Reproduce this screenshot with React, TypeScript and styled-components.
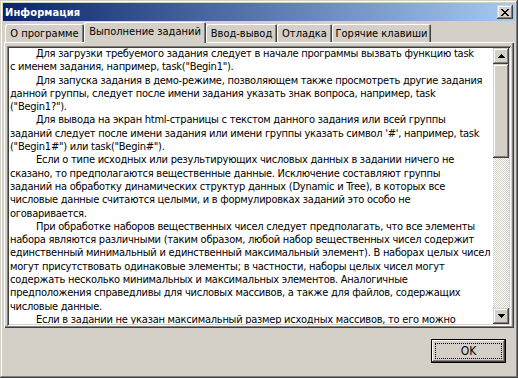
import React from 'react'
import styled, { createGlobalStyle } from 'styled-components'

const GlobalStyle = createGlobalStyle`
  html, body {
    margin: 0;
    padding: 0;
    background: #d4d0c8;
  }
  body {
    font-family: 'DejaVu Sans', 'Liberation Sans', sans-serif;
    font-stretch: condensed;
    font-size: 11px;
  }
`

const raised = `
  box-shadow: inset -1px -1px #404040, inset 1px 1px #d4d0c8,
    inset -2px -2px #808080, inset 2px 2px #ffffff;
`

const WindowStyled = styled.div`
  width: 518px;
  height: 378px;
  box-sizing: border-box;
  padding: 3px;
  background: #d4d0c8;
  display: flex;
  flex-direction: column;
  ${raised}
`

const TitleBarStyled = styled.div`
  height: 18px;
  flex: none;
  display: flex;
  align-items: center;
  justify-content: space-between;
  padding: 0 2px 0 2px;
  background: linear-gradient(to right, #0a246a, #a6caf0);
`

const TitleTextStyled = styled.span`
  color: #ffffff;
  font-weight: bold;
  font-size: 11px;
  letter-spacing: 0.1px;
`

const CloseButtonStyled = styled.div`
  width: 16px;
  height: 14px;
  background: #d4d0c8;
  display: flex;
  align-items: center;
  justify-content: center;
  ${raised}
`

const TabStripStyled = styled.div`
  height: 20px;
  flex: none;
  margin-top: 1px;
  padding-left: 2px;
  display: flex;
  align-items: flex-end;
  position: relative;
  z-index: 1;
`

const TabStyled = styled.div<{ $width: number; $active?: boolean }>`
  width: ${(p) => p.$width}px;
  height: ${(p) => (p.$active ? 21 : 18)}px;
  margin-bottom: ${(p) => (p.$active ? -1 : 0)}px;
  box-sizing: border-box;
  display: flex;
  align-items: center;
  justify-content: center;
  padding-bottom: ${(p) => (p.$active ? 2 : 0)}px;
  color: #000;
  background: #d4d0c8;
  border-top-left-radius: 2px;
  border-top-right-radius: 2px;
  box-shadow: inset 1px 1px #ffffff, inset -1px 0 #404040, inset -2px 0 #808080;
  white-space: nowrap;
`

const PanelStyled = styled.div`
  margin: 0 1px;
  height: 286px;
  flex: none;
  box-sizing: border-box;
  padding: 4px 3px 2px 3px;
  display: flex;
  box-shadow: inset 1px 1px #ffffff, inset -1px -1px #404040,
    inset -2px -2px #808080;
`

const TextBoxStyled = styled.div`
  flex: 1;
  display: flex;
  padding: 2px;
  background: #ffffff;
  box-shadow: inset 1px 1px #808080, inset -1px -1px #ffffff,
    inset 2px 2px #404040, inset -2px -2px #d4d0c8;
  overflow: hidden;
`

const TextAreaStyled = styled.div`
  flex: 1;
  padding: 0 0 0 1px;
  margin-top: -1px;
  overflow: hidden;
  color: #000;
  line-height: 13.3px;
  letter-spacing: -0.25px;
`

const LineStyled = styled.div<{ $indent?: boolean }>`
  white-space: nowrap;
  padding-left: ${(p) => (p.$indent ? 26 : 0)}px;
`

const ScrollBarStyled = styled.div`
  width: 16px;
  display: flex;
  flex-direction: column;
`

const ScrollButtonStyled = styled.div`
  width: 16px;
  height: 16px;
  flex: none;
  background: #d4d0c8;
  display: flex;
  align-items: center;
  justify-content: center;
  ${raised}
`

const ThumbStyled = styled.div`
  height: 94px;
  flex: none;
  background: #d4d0c8;
  ${raised}
`

const TrackStyled = styled.div`
  flex: 1;
  background: repeating-conic-gradient(#d4d0c8 0 25%, #ffffff 0 50%) 0 0 / 2px 2px;
`

const FooterStyled = styled.div`
  flex: 1;
  display: flex;
  justify-content: flex-end;
  align-items: flex-start;
  padding: 11px 9px 0 0;
`

const ButtonStyled = styled.div`
  width: 75px;
  height: 24px;
  box-sizing: border-box;
  border: 1px solid #000;
  padding: 3px;
  background: #d4d0c8;
  box-shadow: inset -1px -1px #404040, inset 1px 1px #ffffff,
    inset -2px -2px #808080;
  display: flex;
`

const FocusStyled = styled.div`
  flex: 1;
  border: 1px dotted #000;
  display: flex;
  align-items: center;
  justify-content: center;
  font-size: 12px;
  color: #000;
`

const paragraphs: string[][] = [
  [
    'Для загрузки требуемого задания следует в начале программы вызвать функцию task',
    'с именем задания, например, task("Begin1").',
  ],
  [
    'Для запуска задания в демо-режиме, позволяющем также просмотреть другие задания',
    'данной группы, следует после имени задания указать знак вопроса, например, task',
    '("Begin1?").',
  ],
  [
    'Для вывода на экран html-страницы с текстом данного задания или всей группы',
    "заданий следует после имени задания или имени группы указать символ '#', например, task",
    '("Begin1#") или task("Begin#").',
  ],
  [
    'Если о типе исходных или результирующих числовых данных в задании ничего не',
    'сказано, то предполагаются вещественные данные. Исключение составляют группы',
    'заданий на обработку динамических структур данных (Dynamic и Tree), в которых все',
    'числовые данные считаются целыми, и в формулировках заданий это особо не',
    'оговаривается.',
  ],
  [
    'При обработке наборов вещественных чисел следует предполагать, что все элементы',
    'набора являются различными (таким образом, любой набор вещественных чисел содержит',
    'единственный минимальный и единственный максимальный элемент). В наборах целых чисел',
    'могут присутствовать одинаковые элементы; в частности, наборы целых чисел могут',
    'содержать несколько минимальных и максимальных элементов. Аналогичные',
    'предположения справедливы для числовых массивов, а также для файлов, содержащих',
    'числовые данные.',
  ],
  [
    'Если в задании не указан максимальный размер исходных массивов, то его можно',
    'считать равным 10.',
  ],
]

const tabs = [
  { label: 'О программе', width: 79 },
  { label: 'Выполнение заданий', width: 122, active: true },
  { label: 'Ввод-вывод', width: 71 },
  { label: 'Отладка', width: 55 },
  { label: 'Горячие клавиши', width: 99 },
]

const Arrow = ({ down }: { down?: boolean }) => (
  <svg width='7' height='4' viewBox='0 0 7 4' shapeRendering='crispEdges'>
    <path d={down ? 'M0 0h7L3.5 4z' : 'M3.5 0L7 4H0z'} fill='#000' />
  </svg>
)

const App = () => {
  return (
    <>
      <GlobalStyle />
      <WindowStyled>
        <TitleBarStyled>
          <TitleTextStyled>Информация</TitleTextStyled>
          <CloseButtonStyled>
            <svg width='8' height='7' viewBox='0 0 8 7' shapeRendering='crispEdges'>
              <path
                d='M0 0h2v1h1v1h2V1h1V0h2v1H7v1H6v1H5v1h1v1h1v1h1v1H6V6H5V5H3v1H2v1H0V6h1V5h1V4h1V3H2V2H1V1H0z'
                fill='#000'
              />
            </svg>
          </CloseButtonStyled>
        </TitleBarStyled>
        <TabStripStyled>
          {tabs.map((t) => (
            <TabStyled key={t.label} $width={t.width} $active={t.active}>
              {t.label}
            </TabStyled>
          ))}
        </TabStripStyled>
        <PanelStyled>
          <TextBoxStyled>
            <TextAreaStyled>
              {paragraphs.map((p, i) =>
                p.map((line, j) => (
                  <LineStyled key={`${i}-${j}`} $indent={j === 0}>
                    {line}
                  </LineStyled>
                ))
              )}
            </TextAreaStyled>
            <ScrollBarStyled>
              <ScrollButtonStyled>
                <Arrow />
              </ScrollButtonStyled>
              <ThumbStyled />
              <TrackStyled />
              <ScrollButtonStyled>
                <Arrow down />
              </ScrollButtonStyled>
            </ScrollBarStyled>
          </TextBoxStyled>
        </PanelStyled>
        <FooterStyled>
          <ButtonStyled>
            <FocusStyled>OK</FocusStyled>
          </ButtonStyled>
        </FooterStyled>
      </WindowStyled>
    </>
  )
}

export default App
